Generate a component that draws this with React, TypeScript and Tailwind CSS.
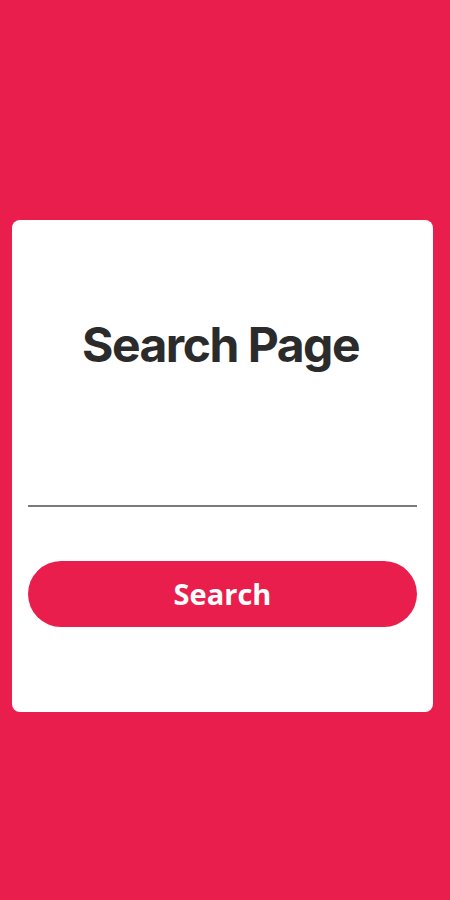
import React from "react";

export default function App() {
  return (
    <div className="min-h-[900px] w-[450px] bg-[#e91e4c] pt-[220px]">
      <div className="ml-[12px] flex h-[492px] w-[421px] flex-col rounded-[8px] bg-white px-4">
        <div className="mt-[97px] flex h-[56px] items-center justify-center">
          <h1
            className="ml-[-4px] text-[48px] font-bold leading-[56px] tracking-[-1.5px] text-[#2b2b2b]"
            style={{ fontFamily: "Inter, 'Noto Sans', sans-serif" }}
          >
            Search Page
          </h1>
        </div>
        <div className="mt-[124px] h-[10px] w-full border-b-2 border-[#7a7a7a]" />
        <button
          className="mt-[54px] flex h-[66px] w-full items-center justify-center rounded-full bg-[#e91e4c] text-[29px] font-bold text-white"
          style={{ fontFamily: "'Open Sans', sans-serif" }}
        >
          Search
        </button>
      </div>
    </div>
  );
}
